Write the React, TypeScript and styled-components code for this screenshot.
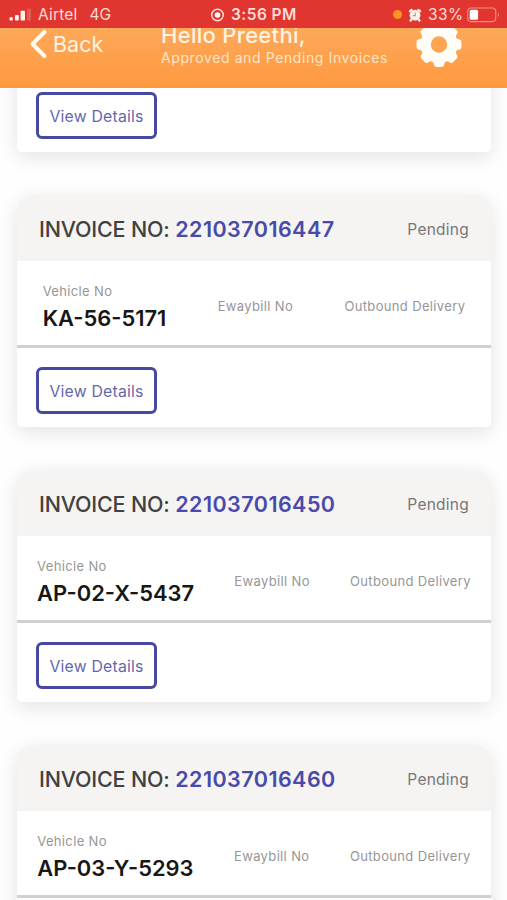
import React from "react";
import styled, { createGlobalStyle } from "styled-components";

const GlobalStyle = createGlobalStyle`
  * { box-sizing: border-box; }
  body { margin: 0; background: #fefefe; font-family: Inter, "Liberation Sans", sans-serif; }
`;

const Screen = styled.div`
  height: 900px;
  width: 507px;
  overflow: hidden;
  display: flex;
  flex-direction: column;
`;

const StatusBar = styled.div`
  height: 28px;
  flex: none;
  background: #e1352f;
  color: #ffdcd6;
  display: grid;
  grid-template-columns: 202px 1fr 114px;
  align-items: center;
  padding-left: 9px;
  font-size: 15.5px;
  line-height: 28px;
`;

const StatusGroup = styled.div<{ $gap: number }>`
  display: flex;
  align-items: center;
  gap: ${(p) => p.$gap}px;
  height: 28px;
  padding-top: 1px;
  white-space: nowrap;
`;

const Carrier = styled.span`
  letter-spacing: 0.2px;
`;

const Network = styled.span`
  margin-left: 6px;
`;

const Clock = styled.span`
  margin-left: -1px;
  font-weight: 600;
  letter-spacing: 0.45px;
`;

const BatteryLevel = styled.span`
  margin-right: -3px;
  letter-spacing: 0.4px;
`;

const PrivacyDot = styled.span`
  width: 9px;
  height: 9px;
  border-radius: 50%;
  background: #ff931f;
`;

const AppBar = styled.header`
  height: 60px;
  flex: none;
  overflow: hidden;
  background: linear-gradient(#fda95b, #fea04c 50%, #ff993f);
  color: #fff3e2;
  display: grid;
  grid-template-columns: 161px 1fr 92px;
`;

const BackButton = styled.button`
  border: 0;
  background: none;
  color: inherit;
  font: inherit;
  padding: 0 0 0 29px;
  height: 32px;
  display: flex;
  align-items: center;
  gap: 5px;
  font-size: 21.5px;
`;

const Titles = styled.div`
  margin-top: -6px;
`;

const Title = styled.div`
  font-size: 22px;
  font-weight: 500;
  line-height: 26px;
  letter-spacing: 0.3px;
`;

const Subtitle = styled.div`
  margin-top: 1px;
  font-size: 14px;
  line-height: 18px;
  color: #ffe5c6;
  letter-spacing: 0.6px;
  white-space: nowrap;
`;

const GearButton = styled.button`
  border: 0;
  background: none;
  padding: 0;
  width: 48px;
  height: 48px;
  margin-top: -8px;
`;

const List = styled.main`
  flex: 1;
  min-height: 0;
  overflow: hidden;
  display: flex;
  flex-direction: column;
  padding: 0 16px 0 17px;
  gap: 43px;
`;

const Card = styled.section<{ $scrolled?: boolean }>`
  flex: none;
  height: 232px;
  margin-top: ${(p) => (p.$scrolled ? -168 : 0)}px;
  border-radius: 15px 15px 5px 5px;
  background: #fff;
  box-shadow: 0 5px 20px rgba(0, 0, 0, 0.11);
`;

const CardHeader = styled.div`
  height: 66px;
  background: #f5f4f2;
  border-radius: 15px 15px 0 0;
  padding: 2px 22px 0;
  display: flex;
  align-items: center;
  justify-content: space-between;
`;

const InvoiceTitle = styled.h2`
  margin: 0;
  font-size: 21.5px;
  font-weight: 500;
  letter-spacing: -0.18px;
  color: #414141;
  white-space: nowrap;
`;

const InvoiceNumber = styled.span`
  font-weight: 600;
  letter-spacing: 0.45px;
  color: #494aa9;
`;

const Status = styled.span`
  font-size: 15.5px;
  letter-spacing: 0.25px;
  color: #777;
`;

const CardBody = styled.div`
  height: 87px;
  border-bottom: 3px solid #d0d0d0;
  padding-top: 6px;
  display: flex;
  align-items: center;
  justify-content: space-around;
`;

const Label = styled.div`
  font-size: 13px;
  line-height: 18px;
  letter-spacing: 0.35px;
  color: #969696;
  white-space: nowrap;
`;

const VehicleNumber = styled.div`
  margin-top: 5px;
  font-size: 21.9px;
  line-height: 26px;
  font-weight: 600;
  color: #171717;
  white-space: nowrap;
`;

const CardFooter = styled.div`
  padding: 19px 0 0 19px;
`;

const DetailsButton = styled.button`
  display: block;
  width: 121px;
  height: 47px;
  padding: 1px 0 0;
  border: 3px solid #4648a2;
  border-radius: 6px;
  background: #fff;
  color: #6667aa;
  font-family: inherit;
  font-size: 15.8px;
  letter-spacing: 0.2px;
  white-space: nowrap;
`;

const SignalIcon = () => (
  <svg width="23" height="14" viewBox="0 0 23 14" fill="#fff3ee">
    <rect x="0.5" y="9.2" width="3.4" height="3.3" rx="0.8" />
    <rect x="6" y="7" width="3.8" height="5.5" rx="0.8" />
    <rect x="11.6" y="2.8" width="4.4" height="9.7" rx="0.8" />
    <rect x="18" y="0.8" width="4" height="11.7" rx="0.8" opacity="0.2" />
  </svg>
);

const RecordIcon = () => (
  <svg width="14" height="14" viewBox="0 0 14 14">
    <circle cx="6.5" cy="7" r="5.8" fill="none" stroke="#ffe4df" strokeWidth="1.4" />
    <circle cx="6.5" cy="7" r="2.8" fill="#fff" />
  </svg>
);

const AlarmIcon = () => (
  <svg width="14" height="14" viewBox="0 0 14 14">
    <path
      d="M2 3.2 3.6 1.9M12 3.2 10.4 1.9M3.4 11.4 2.6 12.5M10.6 11.4 11.4 12.5"
      stroke="#fff3ee"
      strokeWidth="2.3"
      strokeLinecap="round"
    />
    <circle cx="7" cy="7.2" r="5.4" fill="#fff3ee" />
    <path d="M7.3 4.4v3.2H4.8" fill="none" stroke="#e98078" strokeWidth="1.1" />
  </svg>
);

const BatteryIcon = () => (
  <svg width="33" height="16" viewBox="0 0 33 16">
    <rect x="0.7" y="1" width="28" height="13.6" rx="3.5" fill="none" stroke="#f28d82" strokeWidth="1.2" />
    <rect x="2.7" y="2.8" width="8.4" height="10" rx="1.6" fill="#fff" />
    <path d="M30.8 5.6c1.6.7 1.6 3.7 0 4.4z" fill="#f28d82" />
  </svg>
);

const BackIcon = () => (
  <svg width="19" height="30" viewBox="0 0 19 30" fill="none">
    <path d="M15.5 3 3.5 15 15.5 27" stroke="#fffaf2" strokeWidth="4" strokeLinecap="round" strokeLinejoin="round" />
  </svg>
);

const GearIcon = () => (
  <svg width="48" height="48" viewBox="-24 -24.5 48 48" fill="#fffdf6">
    {[0, 45, 90, 135, 180, 225, 270, 315].map((angle) => (
      <path
        key={angle}
        transform={`rotate(${angle})`}
        d="M-6.6-16 -5-20.6Q-4.6-22.4-3-22.4H3Q4.6-22.4 5-20.6L6.6-16z"
      />
    ))}
    <path
      fillRule="evenodd"
      d="M0-18.6A18.6 18.6 0 1 1 0 18.6 18.6 18.6 0 1 1 0-18.6M0-8.2A8.2 8.2 0 1 0 0 8.2 8.2 8.2 0 1 0 0-8.2"
    />
  </svg>
);

interface Invoice {
  number: string;
  vehicle: string;
}

const invoices: Invoice[] = [
  { number: "221037016447", vehicle: "KA-56-5171" },
  { number: "221037016450", vehicle: "AP-02-X-5437" },
  { number: "221037016460", vehicle: "AP-03-Y-5293" },
];

const InvoiceCard = ({ invoice }: { invoice: Invoice }) => (
  <Card>
    <CardHeader>
      <InvoiceTitle>
        INVOICE NO: <InvoiceNumber>{invoice.number}</InvoiceNumber>
      </InvoiceTitle>
      <Status>Pending</Status>
    </CardHeader>
    <CardBody>
      <div>
        <Label>Vehicle No</Label>
        <VehicleNumber>{invoice.vehicle}</VehicleNumber>
      </div>
      <Label>Ewaybill No</Label>
      <Label>Outbound Delivery</Label>
    </CardBody>
    <CardFooter>
      <DetailsButton>View Details</DetailsButton>
    </CardFooter>
  </Card>
);

export default function App() {
  return (
    <>
      <GlobalStyle />
      <Screen>
        <StatusBar>
          <StatusGroup $gap={6}>
            <SignalIcon />
            <Carrier>Airtel</Carrier>
            <Network>4G</Network>
          </StatusGroup>
          <StatusGroup $gap={7}>
            <RecordIcon />
            <Clock>3:56 PM</Clock>
          </StatusGroup>
          <StatusGroup $gap={6}>
            <PrivacyDot />
            <AlarmIcon />
            <BatteryLevel>33%</BatteryLevel>
            <BatteryIcon />
          </StatusGroup>
        </StatusBar>
        <AppBar>
          <BackButton>
            <BackIcon />
            Back
          </BackButton>
          <Titles>
            <Title>Hello Preethi,</Title>
            <Subtitle>Approved and Pending Invoices</Subtitle>
          </Titles>
          <GearButton aria-label="Settings">
            <GearIcon />
          </GearButton>
        </AppBar>
        <List>
          <Card $scrolled>
            <CardHeader />
            <CardBody />
            <CardFooter>
              <DetailsButton>View Details</DetailsButton>
            </CardFooter>
          </Card>
          {invoices.map((invoice) => (
            <InvoiceCard key={invoice.number} invoice={invoice} />
          ))}
        </List>
      </Screen>
    </>
  );
}
